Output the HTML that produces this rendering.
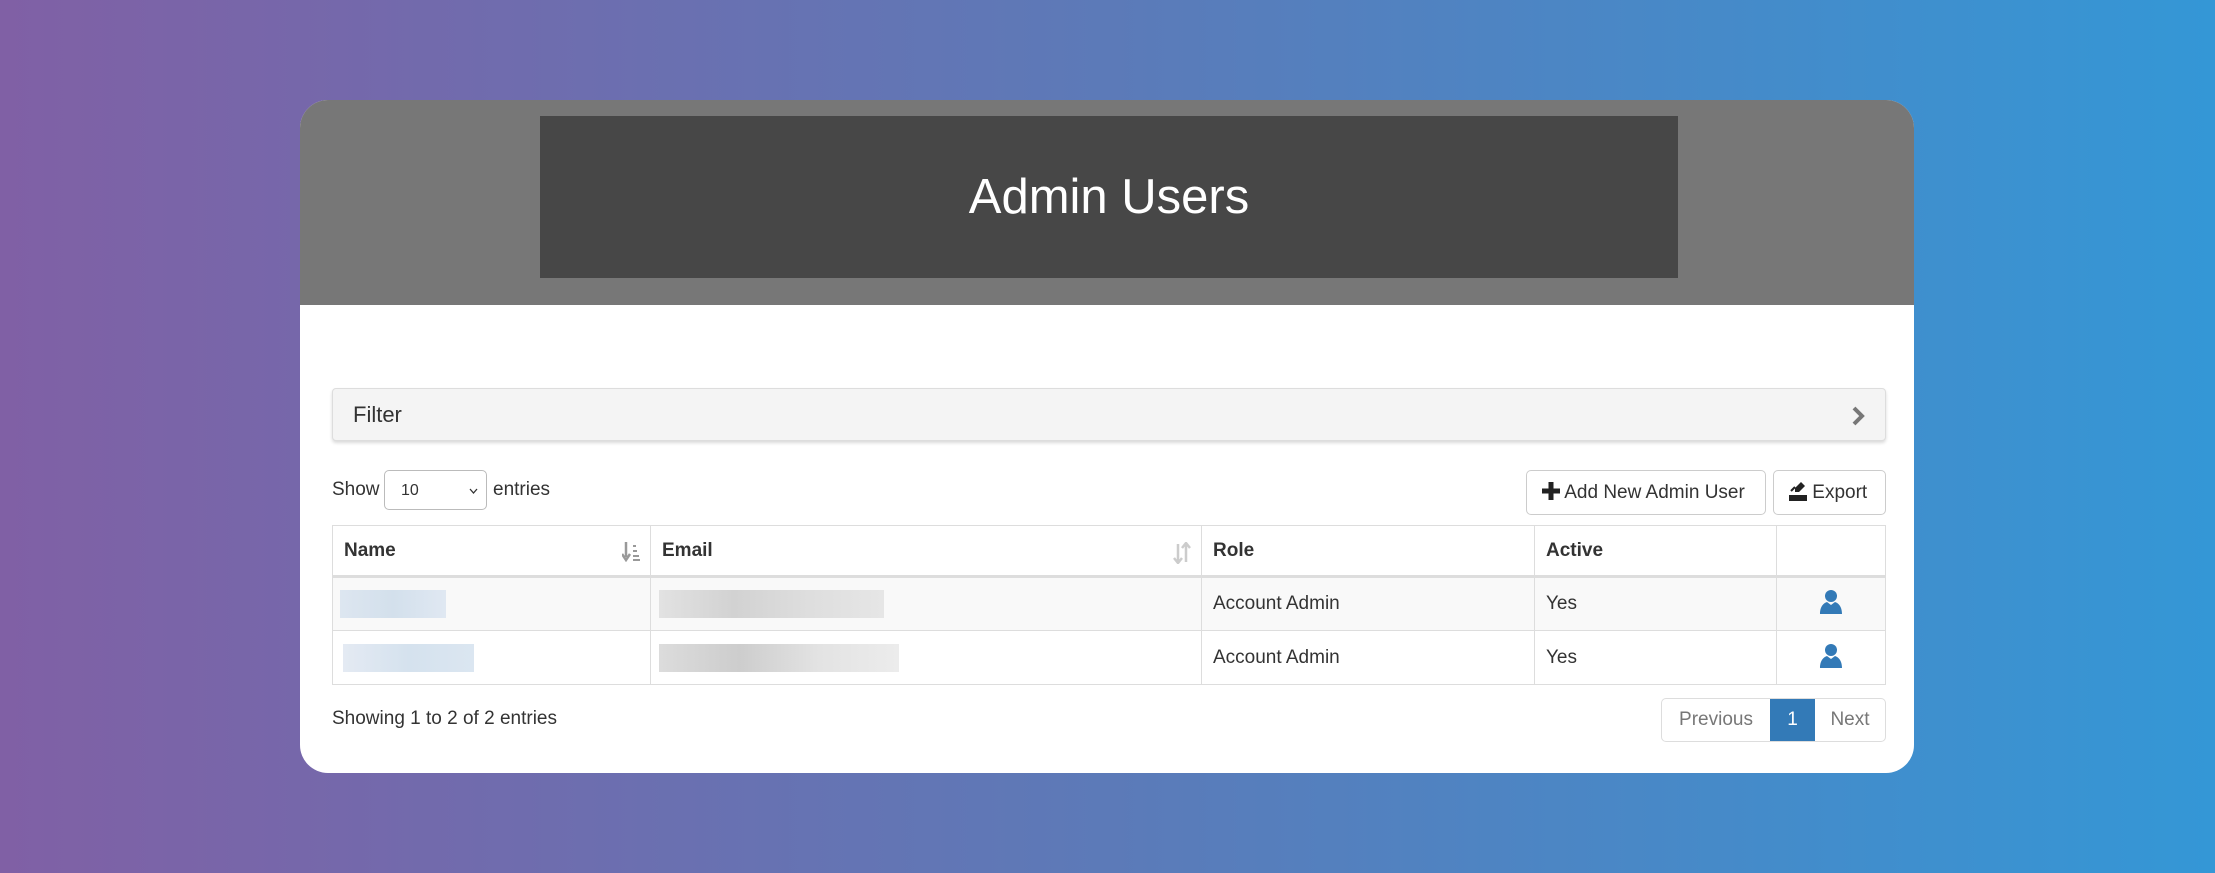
<!DOCTYPE html>
<html><head><style>
*{box-sizing:border-box;margin:0;padding:0}
body{width:2215px;height:873px;background:linear-gradient(90deg,#8060a5 0%,#5c7ab8 50%,#3497d6 100%);font-family:"Liberation Sans",sans-serif;color:#333;position:relative;overflow:hidden}
.card{position:absolute;left:300px;top:100px;width:1614px;height:673px;background:#fff;border-radius:28px;overflow:hidden}
.hdr{position:absolute;left:0;top:0;width:100%;height:205px;background:#777}
.dark{position:absolute;left:240px;top:16px;width:1138px;height:162px;background:#474747;color:#fff;font-size:49px;display:flex;align-items:center;justify-content:center}
.abs{position:absolute}
.filter{left:32px;top:288px;width:1554px;height:53px;background:#f4f4f4;border:1px solid #ddd;border-radius:4px;box-shadow:0 2px 3px rgba(0,0,0,.15);font-size:22px;padding-left:20px;line-height:51px}
.t{font-size:19px;white-space:nowrap}
.sel{left:84px;top:370px;width:103px;height:40px;border:1px solid #bbb;border-radius:5px;font-size:16px;padding:11px 0 0 16px}
.btn{border:1px solid #ccc;border-radius:5px;font-size:19px;height:45px;line-height:43px;background:#fff;white-space:nowrap}
table{position:absolute;left:32px;top:425px;width:1554px;border-collapse:collapse;font-size:19px;table-layout:fixed}
td,th{border:1px solid #ddd;text-align:left;padding:0 11px}
th{height:51px;font-weight:bold;border-bottom:3px solid #ddd;position:relative}
td{height:54px}
tr.odd td{background:#f9f9f9}
.blur{display:inline-block;height:28px;vertical-align:middle}
.pag{top:598px;height:44px;border:1px solid #ddd;border-radius:5px;font-size:19px;line-height:42px;color:#777;display:flex;overflow:hidden}
.si{position:absolute;right:10px;top:16px}
</style></head><body>
<div class="card">
<div class="hdr"><div class="dark">Admin Users</div></div>
<div class="abs filter">Filter<svg class="abs" style="right:20px;top:17px" width="14" height="20" viewBox="0 0 14 20"><path d="M3 2 L11 10 L3 18" stroke="#777" stroke-width="4" fill="none"/></svg></div>
<div class="abs t" style="left:32px;top:379px">Show</div>
<div class="abs sel">10<svg class="abs" style="right:8px;top:17px" width="9" height="6" viewBox="0 0 9 6"><path d="M1 1 L4.5 5 L8 1" stroke="#333" stroke-width="1.3" fill="none"/></svg></div>
<div class="abs t" style="left:193px;top:379px">entries</div>
<div class="abs btn" style="left:1226px;top:370px;width:240px;padding-left:15px"><svg width="18" height="18" viewBox="0 0 18 18" style="vertical-align:-2px"><path d="M6.5 0h5v6.5H18v5h-6.5V18h-5v-6.5H0v-5h6.5z" fill="#222"/></svg> Add New Admin User</div>
<div class="abs btn" style="left:1473px;top:370px;width:113px;padding-left:15px"><svg width="18" height="20" viewBox="0 0 18 20" style="vertical-align:-3px"><path d="M0 14h18v6H0z M12 1l4 4-6 6H6V7z" fill="#222"/><path d="M2 10l4-4" stroke="#222" stroke-width="2"/></svg> Export</div>
<table>
<colgroup><col style="width:318px"><col style="width:551px"><col style="width:333px"><col style="width:242px"><col></colgroup>
<tr><th>Name <svg class="si" width="18" height="20" viewBox="0 0 18 20"><path d="M4 0v15M0 12l4 6 4-6" stroke="#999" stroke-width="2.5" fill="none"/><path d="M11 3h3v2h-3zM11 8h4v2h-4zM11 13h6v2h-6zM11 17h7v2h-7z" fill="#999"/></svg></th><th>Email <svg class="si" width="18" height="22" viewBox="0 0 18 22"><path d="M5 2v18M1 16l4 5 4-5M13 20V2M9 6l4-5 4 5" stroke="#ccc" stroke-width="2.5" fill="none"/></svg></th><th>Role</th><th>Active</th><th></th></tr>
<tr class="odd"><td style="padding-left:7px"><span class="blur" style="width:106px;background:linear-gradient(90deg,#dde6f0,#d3e0ec,#e0e8f2)"></span></td><td style="padding-left:8px"><span class="blur" style="width:225px;background:linear-gradient(90deg,#e2e2e2,#d2d2d2,#dedede,#e6e6e6)"></span></td><td>Account Admin</td><td>Yes</td><td style="text-align:center"><svg width="26" height="26" viewBox="0 0 26 26"><circle cx="13" cy="8" r="6" fill="#337ab7"/><path d="M2 26c0-8 4-11 7-12l4 3 4-3c3 1 7 4 7 12z" fill="#337ab7"/></svg></td></tr>
<tr><td style="padding-left:10px"><span class="blur" style="width:131px;background:linear-gradient(90deg,#e4eaf3,#d5e2ee,#dbe6f1)"></span></td><td style="padding-left:8px"><span class="blur" style="width:240px;background:linear-gradient(90deg,#dcdcdc,#cdcdcd,#e3e3e3,#ececec)"></span></td><td>Account Admin</td><td>Yes</td><td style="text-align:center"><svg width="26" height="26" viewBox="0 0 26 26"><circle cx="13" cy="8" r="6" fill="#337ab7"/><path d="M2 26c0-8 4-11 7-12l4 3 4-3c3 1 7 4 7 12z" fill="#337ab7"/></svg></td></tr>
</table>
<div class="abs t" style="left:32px;top:608px">Showing 1 to 2 of 2 entries</div>
<div class="abs pag" style="left:1361px;width:225px"><span style="width:108px;text-align:center">Previous</span><span style="width:45px;background:#337ab7;color:#fff;text-align:center">1</span><span style="flex:1;text-align:center">Next</span></div>
</div>
</body></html>
